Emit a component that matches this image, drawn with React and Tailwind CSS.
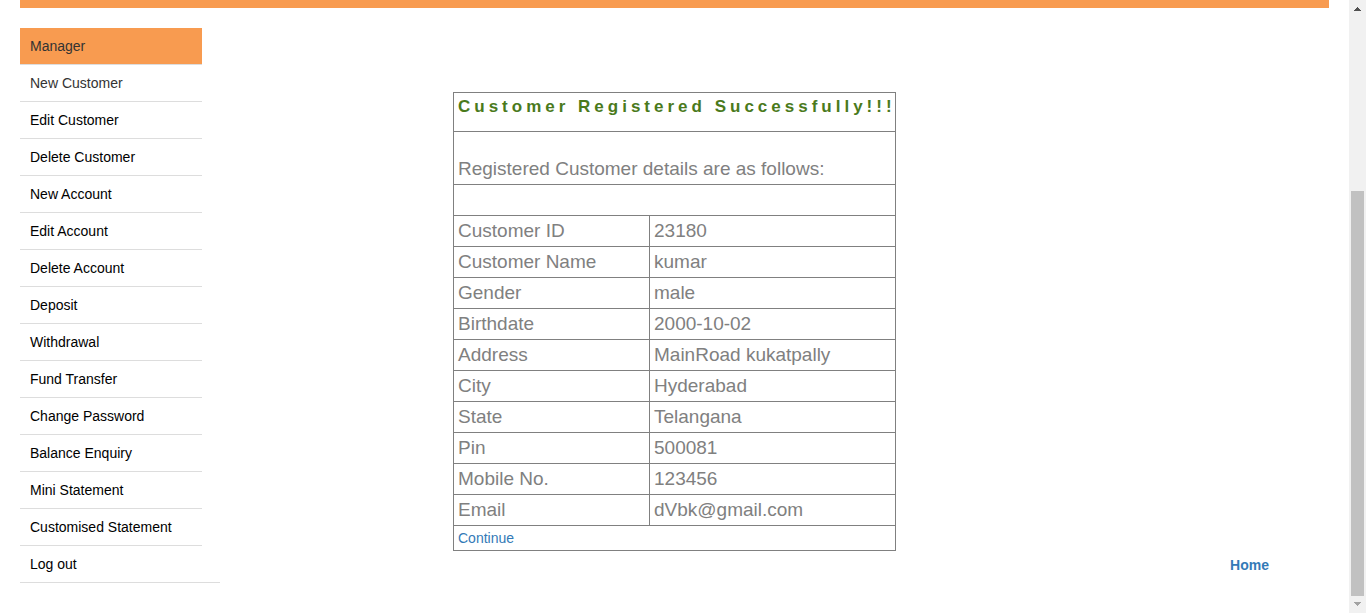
const menuItems = [
  'New Customer',
  'Edit Customer',
  'Delete Customer',
  'New Account',
  'Edit Account',
  'Delete Account',
  'Deposit',
  'Withdrawal',
  'Fund Transfer',
  'Change Password',
  'Balance Enquiry',
  'Mini Statement',
  'Customised Statement',
  'Log out',
];

const details = [
  ['Customer ID', '23180'],
  ['Customer Name', 'kumar'],
  ['Gender', 'male'],
  ['Birthdate', '2000-10-02'],
  ['Address', 'MainRoad kukatpally'],
  ['City', 'Hyderabad'],
  ['State', 'Telangana'],
  ['Pin', '500081'],
  ['Mobile No.', '123456'],
  ['Email', 'dVbk@gmail.com'],
];

function SideMenu() {
  return (
    <nav aria-label="Manager menu" className="pt-5">
      <ul className="text-sm">
        <li className="mr-[18px] border-b border-[#dddddd] bg-[#f89b50]">
          <a href="#manager" className="block px-2.5 py-2 text-[#333333]">
            Manager
          </a>
        </li>
        {menuItems.map((item, i) => (
          <li key={item} className="mr-[18px] border-b border-[#dddddd] last:mr-0">
            <a
              href={'#' + item.toLowerCase().replace(' ', '-')}
              className={i === 0 ? 'block px-2.5 py-2 text-[#333333]' : 'block px-2.5 py-2 text-black'}
            >
              {item}
            </a>
          </li>
        ))}
      </ul>
    </nav>
  );
}

function CustomerTable() {
  return (
    <table className="w-[443px] table-fixed border-collapse border border-[#808080] text-[19px] leading-[27px] text-[#808080]">
      <colgroup>
        <col className="w-[196px]" />
        <col />
      </colgroup>
      <tbody>
        <tr className="h-[39px]">
          <td colSpan={2} className="border border-[#808080] px-1 align-top">
            <p className="text-[17px] font-bold tracking-[4px] whitespace-nowrap text-[#4a7a1c]">
              Customer Registered Successfully!!!
            </p>
          </td>
        </tr>
        <tr className="h-[53px]">
          <td colSpan={2} className="border border-[#808080] px-1 pb-0.5 align-bottom">
            Registered Customer details are as follows:
          </td>
        </tr>
        <tr className="h-[31px]">
          <td colSpan={2} className="border border-[#808080]"></td>
        </tr>
        {details.map(([label, value]) => (
          <tr key={label} className="h-[31px]">
            <th scope="row" className="border border-[#808080] px-1 pb-0.5 text-left font-normal">
              {label}
            </th>
            <td className="border border-[#808080] px-1 pb-0.5">{value}</td>
          </tr>
        ))}
        <tr className="h-[25px]">
          <td colSpan={2} className="border border-[#808080] px-1 text-sm">
            <a href="#continue" className="text-[#337ab7]">
              Continue
            </a>
          </td>
        </tr>
      </tbody>
    </table>
  );
}

function ScrollBar() {
  return (
    <div aria-hidden="true" className="flex w-[17px] shrink-0 flex-col bg-[#f1f1f1]">
      <svg className="h-[17px] w-[17px]" viewBox="0 0 17 17" fill="#505050" shapeRendering="crispEdges">
        <path d="M8 7h1v1h1v1h1v1h1v1H5v-1h1V9h1V8h1z" />
      </svg>
      <div className="flex flex-1 flex-col px-0.5">
        <div className="flex-[174]"></div>
        <div className="flex-[405] bg-[#c1c1c1]"></div>
      </div>
      <svg className="h-[17px] w-[17px]" viewBox="0 0 17 17" fill="#a3a3a3" shapeRendering="crispEdges">
        <path d="M5 6h7v1h-1v1h-1v1H9v1H8V9H7V8H6V7H5z" />
      </svg>
    </div>
  );
}

export default function App() {
  return (
    <div className="flex min-h-screen bg-white font-['Liberation_Sans',Arial,sans-serif]">
      <div className="min-w-0 flex-1 px-5">
        <div className="h-2 bg-[#f89b50]"></div>
        <div className="grid grid-cols-[200px_1fr_200px]">
          <SideMenu />
          <main className="flex items-start justify-center pt-[84px]">
            <CustomerTable />
          </main>
          <div className="flex items-end justify-end pr-[60px] pb-2">
            <a href="#home" className="text-sm font-bold text-[#337ab7]">
              Home
            </a>
          </div>
        </div>
      </div>
      <ScrollBar />
    </div>
  );
}
